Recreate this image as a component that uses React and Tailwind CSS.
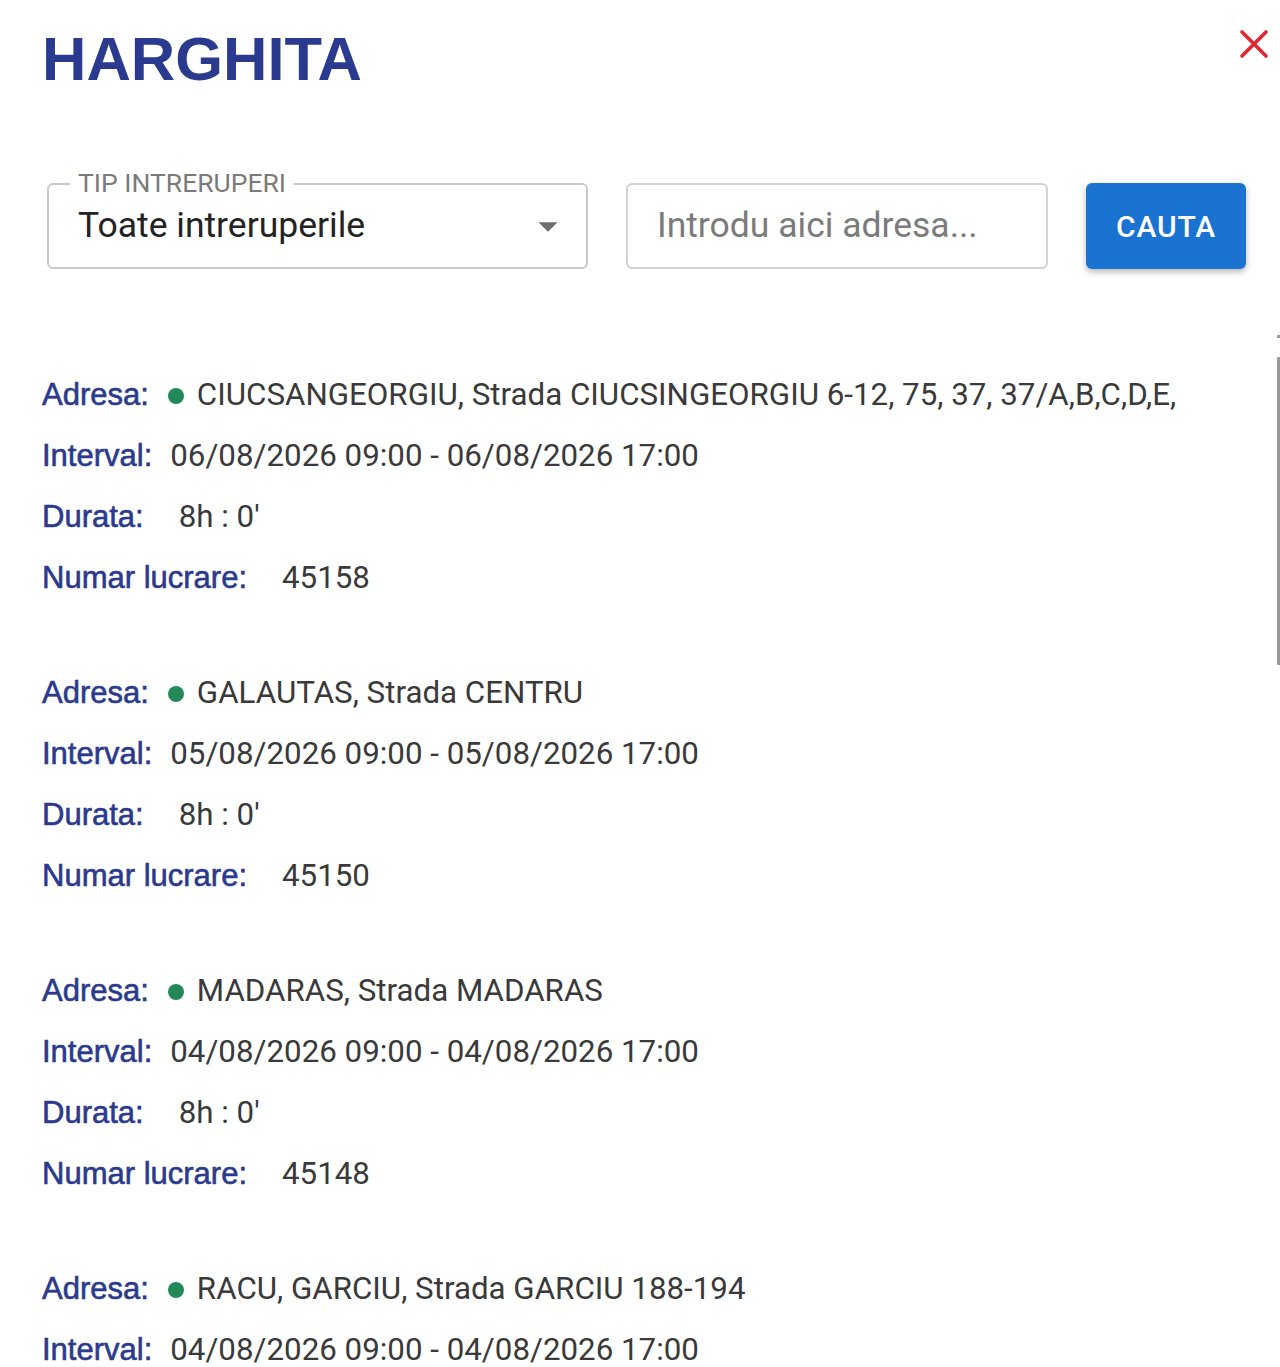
import React from "react";

const interruptions = [
  {
    address: "CIUCSANGEORGIU, Strada CIUCSINGEORGIU 6-12, 75, 37, 37/A,B,C,D,E,",
    interval: "06/08/2026 09:00 - 06/08/2026 17:00",
    duration: "8h : 0'",
    number: "45158",
  },
  {
    address: "GALAUTAS, Strada CENTRU",
    interval: "05/08/2026 09:00 - 05/08/2026 17:00",
    duration: "8h : 0'",
    number: "45150",
  },
  {
    address: "MADARAS, Strada MADARAS",
    interval: "04/08/2026 09:00 - 04/08/2026 17:00",
    duration: "8h : 0'",
    number: "45148",
  },
  {
    address: "RACU, GARCIU, Strada GARCIU 188-194",
    interval: "04/08/2026 09:00 - 04/08/2026 17:00",
    duration: "8h : 0'",
    number: "45141",
  },
];

const labelCls =
  "font-['Liberation_Sans',Arial,sans-serif] text-[31px] text-[#2b3a8c] whitespace-nowrap [-webkit-text-stroke:0.6px_#2b3a8c]";
const valueCls =
  "font-['Roboto',sans-serif] text-[31.3px] text-[#3a3a3a] whitespace-nowrap";

// one row of an entry: label on the left, value after it
const Row = ({ label, gap, children }) => (
  <div className="h-[61px] flex items-center">
    <span className={labelCls}>{label}</span>
    <div className={`flex items-center ${gap}`}>{children}</div>
  </div>
);

const InterruptionItem = ({ item }) => (
  <div className="mb-[54px]">
    <Row label="Adresa:" gap="ml-[19px]">
      <span className="w-[16px] h-[16px] rounded-full bg-[#23895a] mr-[13px]" />
      <span className={valueCls}>{item.address}</span>
    </Row>
    <Row label="Interval:" gap="ml-[18px]">
      <span className={valueCls}>{item.interval}</span>
    </Row>
    <Row label="Durata:" gap="ml-[35px]">
      <span className={valueCls}>{item.duration}</span>
    </Row>
    <Row label="Numar lucrare:" gap="ml-[35px]">
      <span className={valueCls}>{item.number}</span>
    </Row>
  </div>
);

export default function App() {
  return (
    <div className="relative h-[1367px] overflow-hidden bg-white font-['Roboto',sans-serif]">
      {/* close button */}
      <button className="absolute right-[10px] top-[28px] w-[32px] h-[32px] flex items-center justify-center">
        <svg viewBox="0 0 32 32" className="w-[32px] h-[32px]">
          <path
            d="M4 4 L28 28 M28 4 L4 28"
            stroke="#e3262f"
            strokeWidth="3.6"
            strokeLinecap="round"
          />
        </svg>
      </button>

      <div className="pl-[42px] pr-[34px] pt-[28px]">
        <h1 className="font-['Liberation_Sans',Arial,sans-serif] font-bold text-[61.5px] leading-[62px] text-[#2a3a8e]">
          HARGHITA
        </h1>

        {/* filters */}
        <div className="flex items-center gap-[38px] ml-[5px] mt-[93px]">
          <div className="relative shrink-0 w-[541px] h-[86px] border-2 border-[#c9c9c9] rounded-[6px] flex items-center justify-between pl-[29px] pr-[15px]">
            <span className="absolute left-[21px] -top-[17px] bg-white px-[8px] text-[26.5px] leading-[30px] text-[#7a7a7a]">
              TIP INTRERUPERI
            </span>
            <span className="text-[35.5px] text-[#232323]">Toate intreruperile</span>
            <svg viewBox="0 0 24 24" className="w-[46px] h-[46px]">
              <path d="M7 10l5 5 5-5z" fill="#6e6e6e" />
            </svg>
          </div>

          <div className="shrink-0 w-[422px] h-[86px] border-2 border-[#d2d2d2] rounded-[6px] flex items-center pl-[29px]">
            <span className="text-[35.5px] text-[#7b7b7b]">Introdu aici adresa...</span>
          </div>

          <button className="shrink-0 w-[160px] h-[86px] rounded-[6px] bg-[#1a73d0] text-white text-[30px] font-medium tracking-[0.9px] shadow-[0_3px_6px_rgba(0,0,0,0.28)]">
            CAUTA
          </button>
        </div>

        {/* results list */}
        <div className="mt-[96px]">
          {interruptions.map((item) => (
            <InterruptionItem key={item.number} item={item} />
          ))}
        </div>
      </div>

      {/* scrollbar */}
      <div className="absolute right-0 top-[335px] w-[3px] h-[3px] bg-[#9a9a9a]" />
      <div className="absolute right-0 top-[357px] w-[3px] h-[308px] bg-[#9a9a9a] rounded-l-[1px]" />
    </div>
  );
}
